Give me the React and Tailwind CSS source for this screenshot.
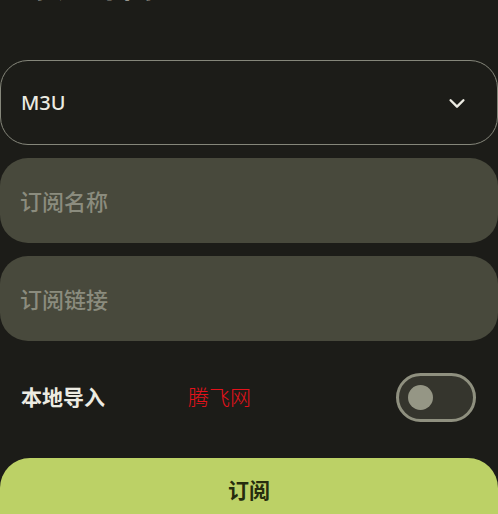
import React, { useState } from 'react';

const cjk = { fontFamily: '"Noto Sans CJK SC", "Noto Sans", sans-serif' };

function Chevron() {
  return (
    <svg width="22" height="22" viewBox="0 0 24 24" fill="none" stroke="#ecebe2" strokeWidth="2.6" strokeLinecap="round" strokeLinejoin="round">
      <path d="M5 9l7 7 7-7" />
    </svg>
  );
}

function Field({ placeholder }) {
  return (
    <div className="h-[85px] rounded-[28px] bg-[#48493c] flex items-center px-5">
      <span className="text-[22px] font-medium text-[#8b8c7e]">{placeholder}</span>
    </div>
  );
}

export default function App() {
  const [local, setLocal] = useState(false);

  return (
    <div className="w-[498px] h-[514px] overflow-hidden bg-[#1c1c18] text-[#ecebe2]" style={cjk}>
      {/* heading scrolled mostly out of view */}
      <h1 className="-mt-[36px] h-[40px] pl-[24px] text-[32px] font-bold leading-[38px] tracking-[1px]">添加订阅</h1>

      <div className="mt-[56px] flex flex-col">
        {/* type dropdown */}
        <div className="h-[85px] rounded-[28px] border border-[#85867a] flex items-center justify-between pl-5 pr-[29px]">
          <span className="text-[20px] font-medium" style={{ fontFamily: '"Noto Sans", sans-serif' }}>M3U</span>
          <Chevron />
        </div>

        <div className="mt-[13px] flex flex-col gap-[13px]">
          <Field placeholder="订阅名称" />
          <Field placeholder="订阅链接" />
        </div>

        {/* local import toggle */}
        <div className="mt-[31px] h-[50px] flex items-center pl-[21px] pr-[22px]">
          <span className="text-[21px] font-bold w-[167px]">本地导入</span>
          <span className="text-[21px] text-[#e4121b] font-light" style={{ fontFamily: '"Noto Sans CJK SC", serif' }}>腾飞网</span>
          <button
            onClick={() => setLocal(!local)}
            className="ml-auto w-[80px] h-[49px] rounded-full border-[3px] border-[#8f907f] bg-[#35352d] flex items-center pl-[9px]"
          >
            <span className="block w-[25px] h-[25px] rounded-full bg-[#959685]" />
          </button>
        </div>

        <button className="mt-[36px] h-[90px] rounded-[30px] bg-[#bcd166] text-[#262c0e] text-[21px] font-bold flex justify-center pt-[16px]">
          订阅
        </button>
      </div>
    </div>
  );
}
